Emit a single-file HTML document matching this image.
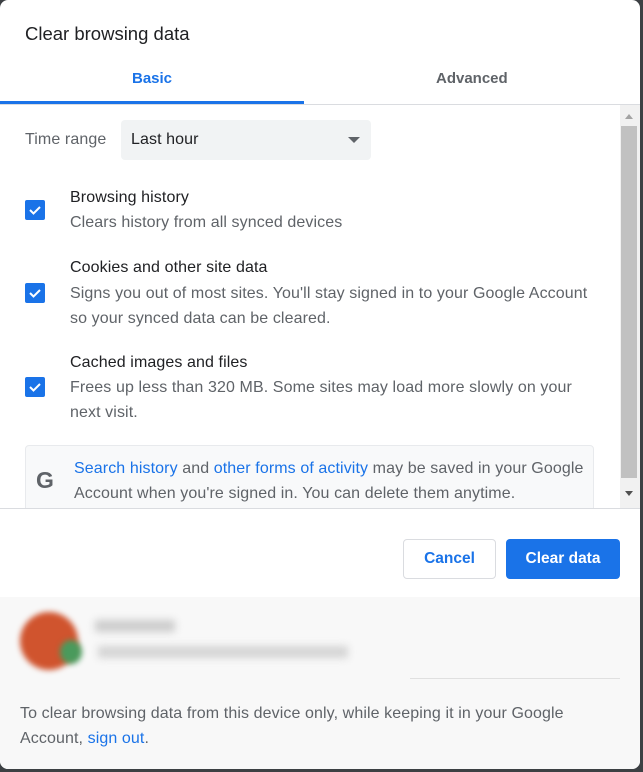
<!DOCTYPE html>
<html><head><style>
*{margin:0;padding:0;box-sizing:border-box}
body{width:643px;height:772px;background:#3c4043;font-family:"Liberation Sans",sans-serif;position:relative;overflow:hidden}
.dlg{position:absolute;left:0;top:0;width:640px;height:769px;background:#fff;border-radius:8px;overflow:hidden}
.a{position:absolute;white-space:nowrap}
.t{font-size:16px;color:#5f6368;letter-spacing:0.1px}
.h{font-size:16px;color:#202124;letter-spacing:0.1px}
.cb{position:absolute;left:25px;width:20px;height:20px;background:#1a73e8;border-radius:2px}
.lk{color:#1a73e8}
.clip{position:absolute;left:0;top:105px;width:640px;height:403px;overflow:hidden}
</style></head><body>
<div class="dlg">
<div class="a" style="left:25px;top:23px;font-size:18.5px;color:#202124">Clear browsing data</div>
<div class="a" style="left:132px;top:70px;font-size:15px;color:#1a73e8;font-weight:bold">Basic</div>
<div class="a" style="left:436px;top:70px;font-size:15px;color:#5f6368;font-weight:bold">Advanced</div>
<div class="a" style="left:0;top:101px;width:304px;height:3px;background:#1a73e8"></div>
<div class="a" style="left:0;top:104px;width:640px;height:1px;background:#dadce0"></div>
<div class="clip">
<div class="a t" style="left:25px;top:26px">Time range</div>
<div class="a" style="left:121px;top:15px;width:250px;height:40px;background:#f1f3f4;border-radius:4px"></div>
<div class="a h" style="left:131px;top:26px">Last hour</div>
<div class="a" style="left:348px;top:32px;width:0;height:0;border-left:6px solid transparent;border-right:6px solid transparent;border-top:6px solid #5f6368"></div>
<div class="cb" style="top:95px"><svg width="20" height="20"><path d="M5 10l3.5 3.5L15 7" stroke="#fff" stroke-width="2" fill="none"/></svg></div>
<div class="a h" style="left:70px;top:84px">Browsing history</div>
<div class="a t" style="left:70px;top:109px">Clears history from all synced devices</div>
<div class="cb" style="top:178px"><svg width="20" height="20"><path d="M5 10l3.5 3.5L15 7" stroke="#fff" stroke-width="2" fill="none"/></svg></div>
<div class="a h" style="left:70px;top:154px">Cookies and other site data</div>
<div class="a t" style="left:70px;top:180px">Signs you out of most sites. You'll stay signed in to your Google Account</div>
<div class="a t" style="left:70px;top:205px">so your synced data can be cleared.</div>
<div class="cb" style="top:272px"><svg width="20" height="20"><path d="M5 10l3.5 3.5L15 7" stroke="#fff" stroke-width="2" fill="none"/></svg></div>
<div class="a h" style="left:70px;top:249px">Cached images and files</div>
<div class="a t" style="left:70px;top:274px">Frees up less than 320 MB. Some sites may load more slowly on your</div>
<div class="a t" style="left:70px;top:299px">next visit.</div>
<div class="a" style="left:25px;top:340px;width:569px;height:80px;background:#f8f9fa;border:1px solid #e8eaed;border-radius:4px"></div>
<div class="a" style="left:36px;top:362px;font-size:23px;font-weight:bold;color:#5f6368">G</div>
<div class="a t" style="left:74px;top:355px"><span class="lk">Search history</span> and <span class="lk">other forms of activity</span> may be saved in your Google</div>
<div class="a t" style="left:74px;top:380px">Account when you're signed in. You can delete them anytime.</div>
</div>
<div class="a" style="left:620px;top:105px;width:20px;height:403px;background:#f1f1f1"></div>
<div class="a" style="left:621px;top:126px;width:16px;height:352px;background:#c1c1c1"></div>
<div class="a" style="left:625px;top:114px;border-left:4px solid transparent;border-right:4px solid transparent;border-bottom:5px solid #a3a3a3"></div>
<div class="a" style="left:625px;top:491px;border-left:4px solid transparent;border-right:4px solid transparent;border-top:5px solid #505050"></div>
<div class="a" style="left:0;top:508px;width:640px;height:1px;background:#dadce0"></div>
<div class="a" style="left:403px;top:539px;width:93px;height:40px;border:1px solid #dadce0;border-radius:4px;color:#1a73e8;font-size:15.5px;font-weight:bold;text-align:center;line-height:38px">Cancel</div>
<div class="a" style="left:506px;top:539px;width:114px;height:40px;background:#1a73e8;border-radius:4px;color:#fff;font-size:15.5px;font-weight:bold;text-align:center;line-height:40px">Clear data</div>
<div class="a" style="left:0;top:597px;width:640px;height:172px;background:#f8f8f8"></div>
<div class="a" style="left:20px;top:612px;width:58px;height:58px;border-radius:50%;background:#d0542e;filter:blur(3px)"></div>
<div class="a" style="left:60px;top:640px;width:22px;height:24px;border-radius:50%;background:#4a9a5c;filter:blur(3px)"></div>
<div class="a" style="left:95px;top:620px;width:80px;height:12px;background:#ccc;filter:blur(4px)"></div>
<div class="a" style="left:98px;top:646px;width:250px;height:12px;background:#d4d4d4;filter:blur(4px)"></div>
<div class="a" style="left:410px;top:678px;width:210px;height:1px;background:#e0e0e0"></div>
<div class="a t" style="left:20px;top:705px">To clear browsing data from this device only, while keeping it in your Google</div>
<div class="a t" style="left:20px;top:730px">Account, <span class="lk">sign out</span>.</div>
</div>
</body></html>
